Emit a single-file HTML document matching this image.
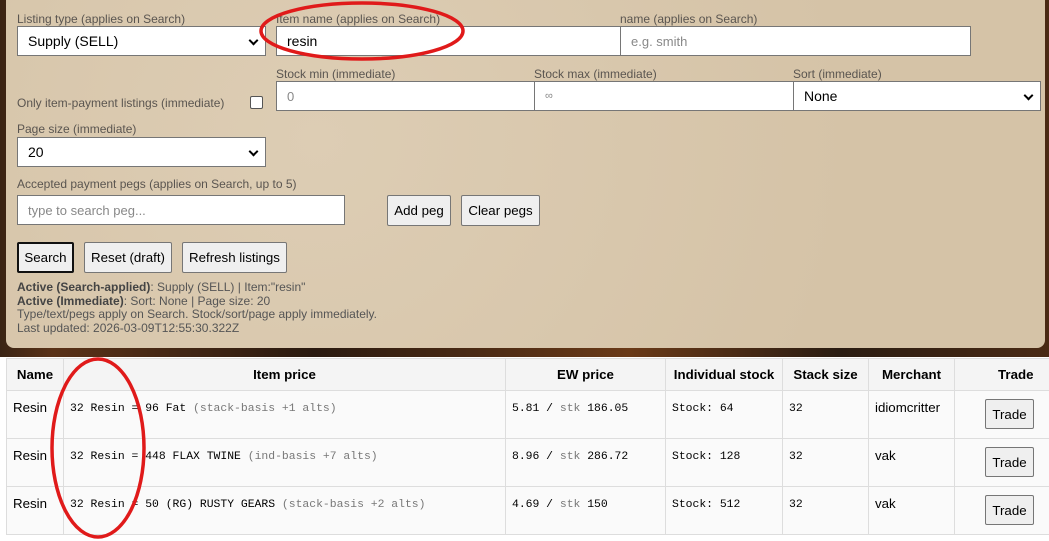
<!DOCTYPE html>
<html><head><meta charset="utf-8"><style>
*{box-sizing:border-box}
body{margin:0;width:1049px;height:541px;overflow:hidden;background:#fff;font-family:"Liberation Sans",Arial,sans-serif;position:relative}
.bg{position:absolute;left:0;top:0;width:1049px;height:357px;background:linear-gradient(90deg,#3a2414 0,#5a3218 5%,#2a1a10 30%,#6a3a18 60%,#2a1c12 80%,#4a2a14 100%)}
.panel{position:absolute;left:6px;top:0;width:1039px;height:348px;background:#d8c8ae;border-radius:0 0 8px 8px;background-image:radial-gradient(circle at 30% 40%,#ddcdb4 0,#d5c3a7 70%)}
.lbl{position:absolute;font-size:12px;color:#5a5550;white-space:nowrap}
.in{position:absolute;background:#fff;border:1px solid #767676;font-size:13px;padding:0 10px;display:flex;align-items:center;color:#000;height:30px}
.ph{color:#888}
.sel::after{content:"";position:absolute;right:8px;top:10px;width:5px;height:5px;border-right:2px solid #000;border-bottom:2px solid #000;transform:rotate(45deg)}
.btn{position:absolute;background:#efefef;border:1px solid #767676;border-radius:2px;font-size:13.3px;display:flex;align-items:center;justify-content:center;height:31px}
.st{position:absolute;left:17px;top:281px;font-size:12px;line-height:13.5px;color:#555}
.st b{color:#444}
table{position:absolute;left:6px;top:358px;border-collapse:collapse;background:#fafafa;font-size:13.3px;table-layout:fixed;width:1060px}
td,th{border:1px solid #ddd;padding:0 6px;vertical-align:top;white-space:nowrap;overflow:hidden}
th{height:32px;vertical-align:middle;background:#f4f4f4;font-size:13.3px}
td{height:48px;padding-top:9px}
.m{font-family:"Liberation Mono",monospace;font-size:11.4px;padding-top:12px}
.g{color:#777}
.tb{background:#efefef;border:1px solid #767676;border-radius:2px;width:49px;height:30px;font-size:13.3px;display:inline-flex;align-items:center;justify-content:center;margin-left:24px}
</style></head><body>
<div class="bg"></div>
<div class="panel"></div>
<div class="lbl" style="left:17px;top:12px">Listing type (applies on Search)</div>
<div class="in sel" style="left:17px;top:26px;width:249px;font-size:14px">Supply (SELL)</div>
<div class="lbl" style="left:276px;top:12px">Item name (applies on Search)</div>
<div class="in" style="left:276px;top:26px;width:345px;font-size:14px">resin</div>
<div class="lbl" style="left:620px;top:12px">name (applies on Search)</div>
<div class="in" style="left:620px;top:26px;width:351px"><span class="ph">e.g. smith</span></div>
<div class="lbl" style="left:276px;top:67px">Stock min (immediate)</div>
<div class="in" style="left:276px;top:81px;width:259px"><span class="ph">0</span></div>
<div class="lbl" style="left:534px;top:67px">Stock max (immediate)</div>
<div class="in" style="left:534px;top:81px;width:260px"><span class="ph" style="font-size:11px">∞</span></div>
<div class="lbl" style="left:793px;top:67px">Sort (immediate)</div>
<div class="in sel" style="left:793px;top:81px;width:248px;font-size:14px">None</div>
<div class="lbl" style="left:17px;top:96px">Only item-payment listings (immediate)</div>
<div style="position:absolute;left:250px;top:96px;width:13px;height:13px;border:1px solid #555;border-radius:2px;background:#fff"></div>
<div class="lbl" style="left:17px;top:122px">Page size (immediate)</div>
<div class="in sel" style="left:17px;top:137px;width:249px;font-size:14px">20</div>
<div class="lbl" style="left:17px;top:177px">Accepted payment pegs (applies on Search, up to 5)</div>
<div class="in" style="left:17px;top:195px;width:328px"><span class="ph">type to search peg...</span></div>
<div class="btn" style="left:387px;top:195px;width:64px">Add peg</div>
<div class="btn" style="left:461px;top:195px;width:79px">Clear pegs</div>
<div class="btn" style="left:17px;top:242px;width:57px;border:2px solid #111">Search</div>
<div class="btn" style="left:84px;top:242px;width:88px">Reset (draft)</div>
<div class="btn" style="left:182px;top:242px;width:105px">Refresh listings</div>
<div class="st"><b>Active (Search-applied)</b>: Supply (SELL) | Item:"resin"<br><b>Active (Immediate)</b>: Sort: None | Page size: 20<br>Type/text/pegs apply on Search. Stock/sort/page apply immediately.<br>Last updated: 2026-03-09T12:55:30.322Z</div>
<table>
<colgroup><col style="width:57px"><col style="width:442px"><col style="width:160px"><col style="width:117px"><col style="width:86px"><col style="width:86px"><col style="width:112px"></colgroup>
<tr><th>Name</th><th>Item price</th><th>EW price</th><th>Individual stock</th><th>Stack size</th><th>Merchant</th><th style="text-align:left;padding-left:43px">Trade</th></tr>
<tr><td>Resin</td><td class="m">32 Resin = 96 Fat <span class="g">(stack-basis +1 alts)</span></td><td class="m">5.81 / <span class="g">stk</span> 186.05</td><td class="m">Stock: 64</td><td class="m">32</td><td>idiomcritter</td><td style="padding-top:8px"><span class="tb">Trade</span></td></tr>
<tr><td>Resin</td><td class="m">32 Resin = 448 FLAX TWINE <span class="g">(ind-basis +7 alts)</span></td><td class="m">8.96 / <span class="g">stk</span> 286.72</td><td class="m">Stock: 128</td><td class="m">32</td><td>vak</td><td style="padding-top:8px"><span class="tb">Trade</span></td></tr>
<tr><td>Resin</td><td class="m">32 Resin = 50 (RG) RUSTY GEARS <span class="g">(stack-basis +2 alts)</span></td><td class="m">4.69 / <span class="g">stk</span> 150</td><td class="m">Stock: 512</td><td class="m">32</td><td>vak</td><td style="padding-top:8px"><span class="tb">Trade</span></td></tr>
</table>
<svg style="position:absolute;left:0;top:0" width="1049" height="541"><ellipse cx="362" cy="31" rx="101" ry="28" fill="none" stroke="#e01a1a" stroke-width="3.5"/><ellipse cx="98" cy="448" rx="46" ry="89" fill="none" stroke="#e01a1a" stroke-width="3.5"/></svg>
</body></html>
